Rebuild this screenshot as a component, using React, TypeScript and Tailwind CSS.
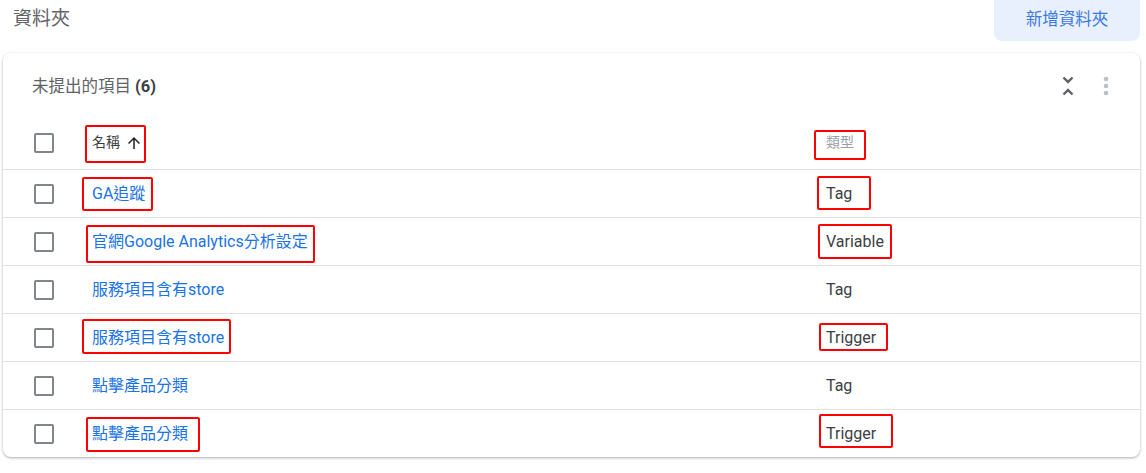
import React from "react";

const rows: { name: string; type: string }[] = [
  { name: "GA追蹤", type: "Tag" },
  { name: "官網Google Analytics分析設定", type: "Variable" },
  { name: "服務項目含有store", type: "Tag" },
  { name: "服務項目含有store", type: "Trigger" },
  { name: "點擊產品分類", type: "Tag" },
  { name: "點擊產品分類", type: "Trigger" },
];

const boxes = [
  { l: 85, t: 125, w: 61, h: 38 },
  { l: 82, t: 177, w: 71, h: 34 },
  { l: 86, t: 225, w: 229, h: 38 },
  { l: 814, t: 130, w: 52, h: 30 },
  { l: 817, t: 176, w: 54, h: 34 },
  { l: 818, t: 224, w: 74, h: 35 },
  { l: 82, t: 319, w: 149, h: 35 },
  { l: 86, t: 417, w: 114, h: 35 },
  { l: 819, t: 323, w: 69, h: 28 },
  { l: 819, t: 414, w: 74, h: 34 },
];

function Checkbox() {
  return <div className="w-5 h-5 border-2 border-[#80868b] rounded-[2px] box-border" />;
}

export default function App() {
  return (
    <div className="relative w-[1146px] h-[473px] bg-white overflow-hidden font-[Roboto,'Noto_Sans_CJK_TC',sans-serif]">
      <div className="flex items-start justify-between h-[53px] pl-[13px] pr-[6px]">
        <div className="text-[19px] leading-[38px] text-[#5f6368]">資料夾</div>
        <div className="w-[146px] h-[41px] rounded-b-lg bg-[#e8f0fe] flex items-center justify-center text-[16.5px] text-[#3b78e0]">
          新增資料夾
        </div>
      </div>

      <div className="ml-[3px] mr-[6px] h-[404px] rounded-lg bg-white shadow-[0_1px_3px_rgba(60,64,67,0.3),0_1px_2px_rgba(60,64,67,0.15)] overflow-hidden">
        <div className="h-[66px] flex items-center pl-[29px] pr-[20px]">
          <div className="flex-1 text-[16.5px] text-[#5f6368] pt-[3px]">
            未提出的項目 <span className="font-bold text-[#3c4043]">(6)</span>
          </div>
          <svg width="28" height="28" viewBox="0 0 24 24" className="mr-[10px]" fill="#5f6368">
            <path d="M7.41 18.59L8.83 20 12 16.83 15.17 20l1.41-1.41L12 14l-4.59 4.59zm9.18-13.18L15.17 4 12 7.17 8.83 4 7.41 5.41 12 10l4.59-4.59z" />
          </svg>
          <svg width="28" height="28" viewBox="0 0 24 24" fill="#bdc1c6">
            <circle cx="12" cy="6" r="2" />
            <circle cx="12" cy="12" r="2" />
            <circle cx="12" cy="18" r="2" />
          </svg>
        </div>

        <div className="h-[50px] flex items-center pb-[3px]">
          <div className="w-[89px] pl-[31px]">
            <Checkbox />
          </div>
          <div className="w-[734px] flex items-center text-[14px] text-[#3c4043]">
            名稱
            <svg width="18" height="18" viewBox="0 0 24 24" fill="#202124" className="ml-[5px]">
              <path d="M4 12l1.41 1.41L11 7.83V20h2V7.83l5.58 5.59L20 12l-8-8-8 8z" />
            </svg>
          </div>
          <div className="text-[14px] text-[#9aa0a6]">類型</div>
        </div>

        {rows.map((r, i) => (
          <div key={i} className="h-[48px] flex items-center border-t border-[#e0e0e0]">
            <div className="w-[89px] pl-[31px]">
              <Checkbox />
            </div>
            <div className="w-[734px] text-[16px] text-[#1a73e8]">{r.name}</div>
            <div className="text-[16px] text-[#3c4043]">{r.type}</div>
          </div>
        ))}
      </div>

      {boxes.map((b, i) => (
        <div
          key={i}
          className="absolute border-2 border-[#ff0000] rounded-[2px] pointer-events-none"
          style={{ left: b.l, top: b.t, width: b.w, height: b.h }}
        />
      ))}
    </div>
  );
}
